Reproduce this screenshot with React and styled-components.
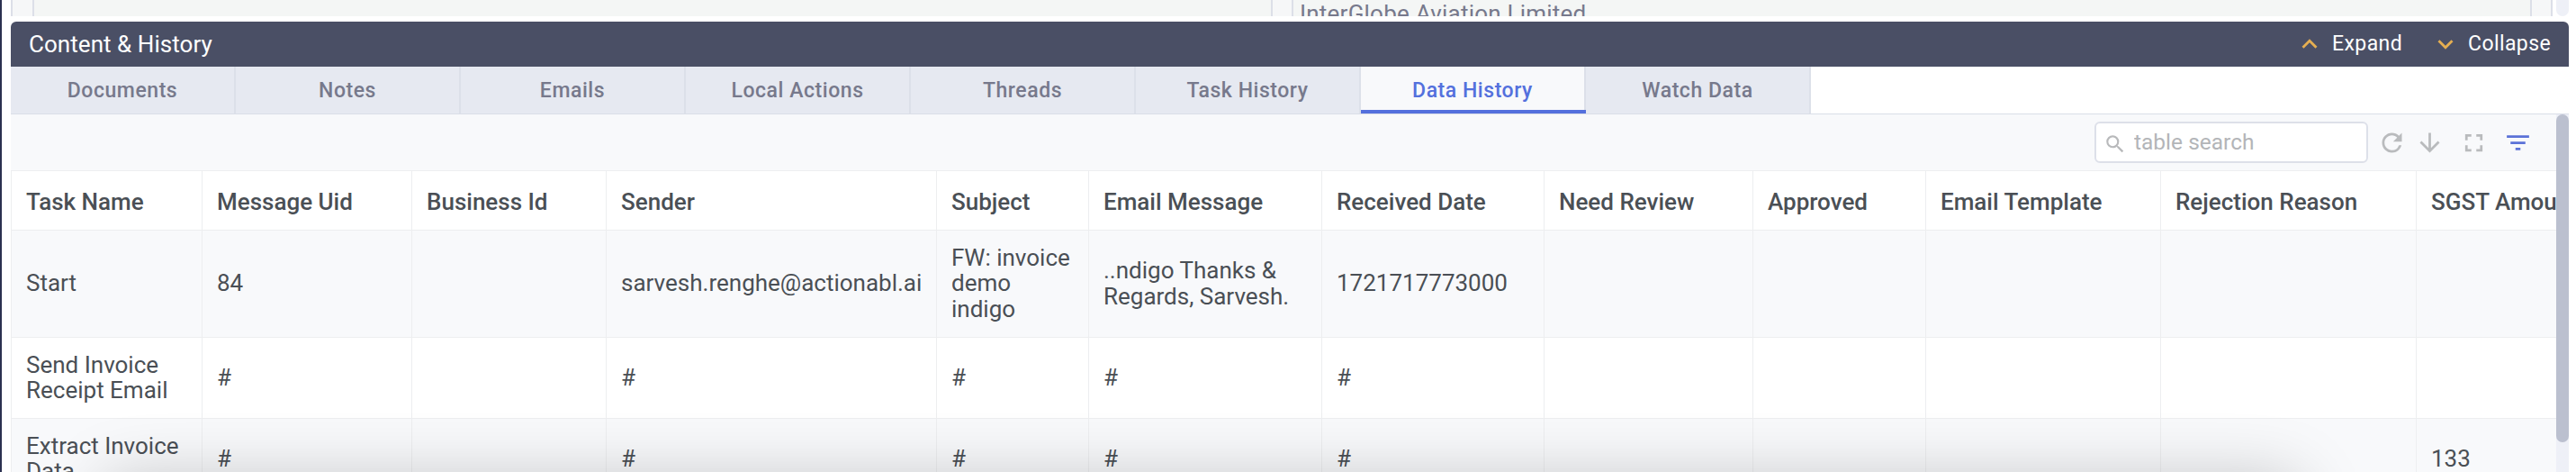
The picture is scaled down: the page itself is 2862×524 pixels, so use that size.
import React from "react";
import styled, { createGlobalStyle } from "styled-components";
import {
  MdArrowDownward,
  MdFilterList,
  MdFullscreen,
  MdKeyboardArrowDown,
  MdKeyboardArrowUp,
  MdRefresh,
  MdSearch,
} from "react-icons/md";

const GlobalStyle = createGlobalStyle`
  *, *::before, *::after { box-sizing: border-box; }
  body { margin: 0; background: #fff; font-family: Roboto, "Liberation Sans", sans-serif; }
`;

const Page = styled.div`
  position: relative;
  height: 524px;
  overflow: hidden;
  display: flex;
  flex-direction: column;
  padding: 0 8px 0 10px;
  border-left: 2px solid #2b3050;
`;

const FormArea = styled.div`
  flex: none;
  height: 18px;
  display: flex;
  justify-content: space-between;
  overflow: hidden;
`;

const FormGrid = styled.div`
  width: 2824px;
  display: grid;
  grid-template-columns: 24px 1376px 23px 1376px 25px;
  background: #f4f6f5;
`;

const FormCell = styled.div`
  height: 18px;
  padding-left: 7px;
  border-left: 2px solid #dcdfe8;
  border-right: ${(p) => (p.$last ? "2px solid #dcdfe8" : "0")};
  background: ${(p) => (p.$gutter ? "#f6f7f8" : "transparent")};
  color: #77798c;
  font-size: 26px;
  line-height: 31px;
  letter-spacing: 0.22px;
  white-space: nowrap;
  overflow: hidden;
`;

const FormTrack = styled.div`
  width: 14px;
  background: #eef0f7;
  border-radius: 0 0 7px 7px;
`;

const SectionBar = styled.header`
  flex: none;
  display: flex;
  align-items: center;
  height: 50px;
  margin-top: 6px;
  padding: 0 20px 0 20px;
  border-radius: 6px 6px 0 0;
  background: #4a4f65;
  color: #fff;
`;

const SectionTitle = styled.h2`
  flex: 1;
  margin: 0;
  font-size: 26px;
  line-height: 30px;
  font-weight: 400;
  letter-spacing: 0.05px;
`;

const BarAction = styled.button`
  display: flex;
  align-items: center;
  gap: 8px;
  margin: 0 0 0 31px;
  padding: 0;
  border: 0;
  background: none;
  color: #fff;
  font: 400 23px/28px Roboto, sans-serif;
  letter-spacing: 0.4px;

  svg {
    color: #e5ae51;
    width: 34px;
    height: 34px;
  }
`;

const Tabs = styled.nav`
  flex: none;
  display: flex;
  height: 53px;
  border-bottom: 1px solid #dadee8;
`;

const Tab = styled.button`
  position: relative;
  width: 250px;
  height: 52px;
  padding: 0;
  border: 0;
  border-right: 2px solid #dce0e9;
  background: ${(p) => (p.$active ? "#f8f9fb" : "#e6e9f1")};
  color: ${(p) => (p.$active ? "#5470dd" : "#77798c")};
  font: 500 23px/27px Roboto, sans-serif;
  letter-spacing: 0.55px;

  &::after {
    content: "";
    position: absolute;
    left: 0;
    right: -2px;
    bottom: 0;
    height: ${(p) => (p.$active ? 4 : 0)}px;
    background: #5470dd;
  }
`;

const Body = styled.div`
  flex: 1;
  min-height: 0;
  display: flex;
`;

const Content = styled.div`
  width: 2828px;
  overflow: hidden;
`;

const Toolbar = styled.div`
  display: flex;
  align-items: center;
  justify-content: flex-end;
  height: 62px;
  padding-right: 26px;
  background: #f8f9fb;
`;

const SearchBox = styled.label`
  display: flex;
  align-items: center;
  gap: 8px;
  width: 304px;
  height: 46px;
  margin-right: 10px;
  padding-left: 8px;
  border: 2px solid #dde0e9;
  border-radius: 6px;
  background: #fff;
  color: #b8b9bb;

  svg {
    flex: none;
    width: 26px;
    height: 26px;
    margin-top: 4px;
  }
`;

const SearchInput = styled.input`
  width: 240px;
  padding: 0;
  border: 0;
  outline: 0;
  background: none;
  font: 400 24.5px/30px Roboto, sans-serif;

  &::placeholder {
    color: #b3b5b8;
    opacity: 1;
  }
`;

const Tool = styled.button`
  display: flex;
  padding: 0;
  margin: 0 0 0 ${(p) => p.$gap || 0}px;
  border: 0;
  background: none;
  color: ${(p) => (p.$active ? "#5b72d8" : "#b9bbbd")};

  svg {
    width: 33px;
    height: 33px;
  }
`;

const Table = styled.table`
  width: 2872px;
  table-layout: fixed;
  border-collapse: separate;
  border-spacing: 0;
  color: #4a4f55;
  font-size: 26px;
  line-height: 28.5px;
`;

const Row = styled.tr`
  height: ${(p) => p.$height}px;
  background: ${(p) => (p.$shaded ? "#f8f9fb" : "#fff")};
`;

const Cell = styled.td`
  padding: ${(p) => (p.$head ? "3px 0 0 16px" : "0 0 1px 16px")};
  border-top: 1px solid #edeef0;
  border-left: 1px solid #edeef0;
  text-align: left;
  vertical-align: middle;
  font-weight: ${(p) => (p.$head ? 500 : 400)};
  white-space: pre;
`;

const ScrollTrack = styled.div`
  width: 14px;
  background: #eef0f7;
`;

const ScrollThumb = styled.div`
  height: 364px;
  border-radius: 7px;
  background: #bbc0cf;
`;

const FloatingSheet = styled.div`
  position: absolute;
  left: 112px;
  right: 306px;
  top: 532px;
  height: 200px;
  border-radius: 20px;
  box-shadow: 0 0 72px rgba(0, 0, 0, 0.22);
  pointer-events: none;
`;

const tabs = [
  "Documents",
  "Notes",
  "Emails",
  "Local Actions",
  "Threads",
  "Task History",
  "Data History",
  "Watch Data",
];

const columns = [
  ["Task Name", 212],
  ["Message Uid", 233],
  ["Business Id", 216],
  ["Sender", 367],
  ["Subject", 169],
  ["Email Message", 259],
  ["Received Date", 247],
  ["Need Review", 232],
  ["Approved", 192],
  ["Email Template", 261],
  ["Rejection Reason", 284],
  ["SGST Amount", 200],
];

const rows = [
  {
    height: 119,
    cells: [
      "Start", "84", "", "sarvesh.renghe@actionabl.ai", "FW: invoice\ndemo\nindigo",
      "..ndigo Thanks &\nRegards, Sarvesh.", "1721717773000", "", "", "", "", "",
    ],
  },
  {
    height: 90,
    cells: ["Send Invoice\nReceipt Email", "#", "", "#", "#", "#", "#", "", "", "", "", ""],
  },
  {
    height: 90,
    cells: ["Extract Invoice\nData", "#", "", "#", "#", "#", "#", "", "", "", "", "133"],
  },
];

export default function App() {
  return (
    <>
      <GlobalStyle />
      <Page>
        <FormArea>
          <FormGrid>
            <FormCell $gutter />
            <FormCell />
            <FormCell $gutter />
            <FormCell>InterGlobe Aviation Limited</FormCell>
            <FormCell $gutter $last />
          </FormGrid>
          <FormTrack />
        </FormArea>

        <SectionBar>
          <SectionTitle>Content &amp; History</SectionTitle>
          <BarAction><MdKeyboardArrowUp />Expand</BarAction>
          <BarAction><MdKeyboardArrowDown />Collapse</BarAction>
        </SectionBar>

        <Tabs>
          {tabs.map((name) => (
            <Tab key={name} $active={name === "Data History"}>{name}</Tab>
          ))}
        </Tabs>

        <Body>
          <Content>
            <Toolbar>
              <SearchBox>
                <MdSearch />
                <SearchInput placeholder="table search" />
              </SearchBox>
              <Tool><MdRefresh /></Tool>
              <Tool $gap={9}><MdArrowDownward /></Tool>
              <Tool $gap={16}><MdFullscreen /></Tool>
              <Tool $gap={16} $active><MdFilterList /></Tool>
            </Toolbar>
            <Table>
              <colgroup>
                {columns.map(([name, width]) => <col key={name} width={width} />)}
              </colgroup>
              <thead>
                <Row $height={66}>
                  {columns.map(([name]) => <Cell as="th" $head key={name}>{name}</Cell>)}
                </Row>
              </thead>
              <tbody>
                {rows.map((row, i) => (
                  <Row key={row.cells[0]} $height={row.height} $shaded={i % 2 === 0}>
                    {row.cells.map((text, j) => <Cell key={columns[j][0]}>{text}</Cell>)}
                  </Row>
                ))}
              </tbody>
            </Table>
          </Content>
          <ScrollTrack>
            <ScrollThumb />
          </ScrollTrack>
        </Body>
        <FloatingSheet />
      </Page>
    </>
  );
}
